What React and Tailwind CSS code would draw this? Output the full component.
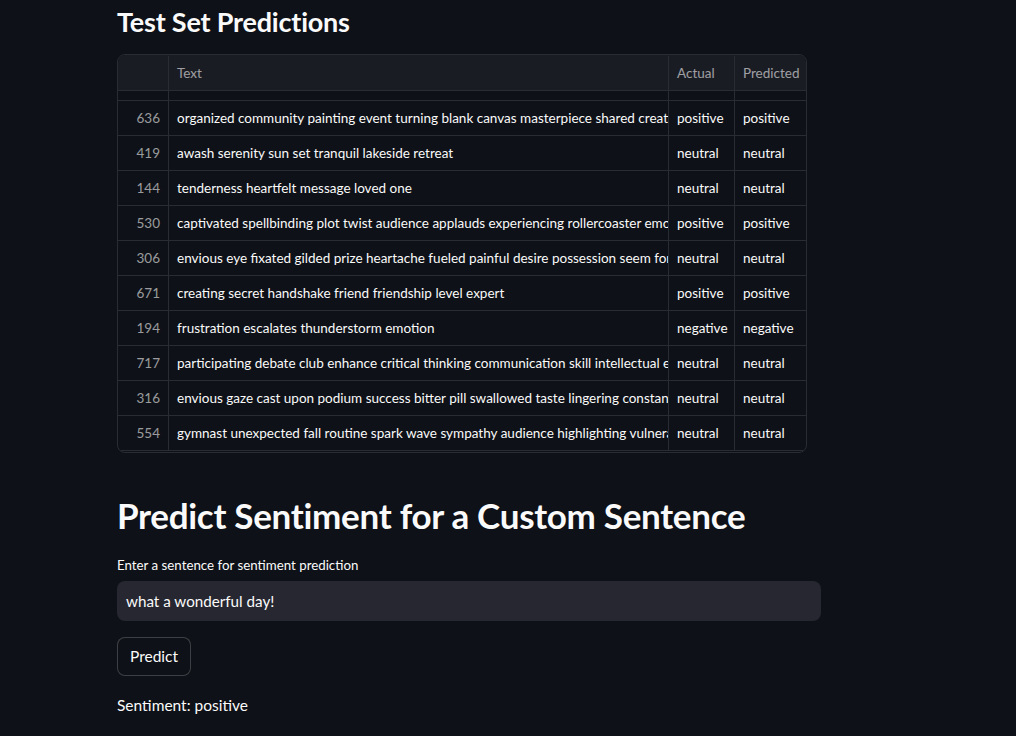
import React from "react";

const rows = [
  ["636", "organized community painting event turning blank canvas masterpiece shared creati", "positive", "positive"],
  ["419", "awash serenity sun set tranquil lakeside retreat", "neutral", "neutral"],
  ["144", "tenderness heartfelt message loved one", "neutral", "neutral"],
  ["530", "captivated spellbinding plot twist audience applauds experiencing rollercoaster emo", "positive", "positive"],
  ["306", "envious eye fixated gilded prize heartache fueled painful desire possession seem fore", "neutral", "neutral"],
  ["671", "creating secret handshake friend friendship level expert", "positive", "positive"],
  ["194", "frustration escalates thunderstorm emotion", "negative", "negative"],
  ["717", "participating debate club enhance critical thinking communication skill intellectual e", "neutral", "neutral"],
  ["316", "envious gaze cast upon podium success bitter pill swallowed taste lingering constant", "neutral", "neutral"],
  ["554", "gymnast unexpected fall routine spark wave sympathy audience highlighting vulnera", "neutral", "neutral"],
];

const Row = ({ r, h = "h-[35px]" }) => (
  <div className={`flex ${h} border-b border-[#2a2c33] text-[13.5px] text-[#fafafa]`}>
    <div className="w-[51px] shrink-0 flex items-center justify-end pr-2 text-[#fafafa]/60 border-r border-[#2a2c33]">{r[0]}</div>
    <div className="w-[500px] shrink-0 flex items-center px-2 overflow-hidden whitespace-nowrap border-r border-[#2a2c33]">{r[1]}</div>
    <div className="w-[66px] shrink-0 flex items-center px-2 overflow-hidden whitespace-nowrap border-r border-[#2a2c33]">{r[2]}</div>
    <div className="flex-1 flex items-center px-2 overflow-hidden whitespace-nowrap">{r[3]}</div>
  </div>
);

export default function App() {
  return (
    <div className="min-h-screen h-[736px] overflow-hidden bg-[#0e1117] text-[#fafafa] font-['Lato',sans-serif]">
      <div className="w-[704px] ml-[117px]">
        <h3 className="text-[27px] font-bold leading-none pt-[8px] h-[54px] tracking-[-0.2px]">Test Set Predictions</h3>

        <div className="w-[690px] h-[399px] rounded-lg border border-[#2a2c33] overflow-hidden bg-[#0e1117]">
          <div className="flex h-[36px] pt-px bg-[#1a1c24] border-b border-[#2a2c33] text-[13.5px] text-[#fafafa]/60">
            <div className="w-[51px] shrink-0 border-r border-[#2a2c33]" />
            <div className="w-[500px] shrink-0 flex items-center px-2 border-r border-[#2a2c33]">Text</div>
            <div className="w-[66px] shrink-0 flex items-center px-2 border-r border-[#2a2c33]">Actual</div>
            <div className="flex-1 flex items-center px-2">Predicted</div>
          </div>
          <Row r={["", "", "", ""]} h="h-[10px]" />
          {rows.map((r) => (
            <Row key={r[0]} r={r} />
          ))}
        </div>

        <h2 className="text-[35px] font-bold leading-none mt-[45px] tracking-[-0.3px]">Predict Sentiment for a Custom Sentence</h2>

        <label className="block text-[13.3px] mt-[26px] leading-none">Enter a sentence for sentiment prediction</label>
        <div className="mt-[9px] h-[40px] rounded-lg bg-[#262730] flex items-center px-[9px] text-[15.2px]">what a wonderful day!</div>

        <button className="mt-[16px] h-[39px] px-[12px] rounded-lg border border-[#fafafa]/20 bg-[#0e1117] text-[15.5px]">Predict</button>

        <p className="mt-[22px] text-[15.5px] leading-none">Sentiment: positive</p>
      </div>
    </div>
  );
}
